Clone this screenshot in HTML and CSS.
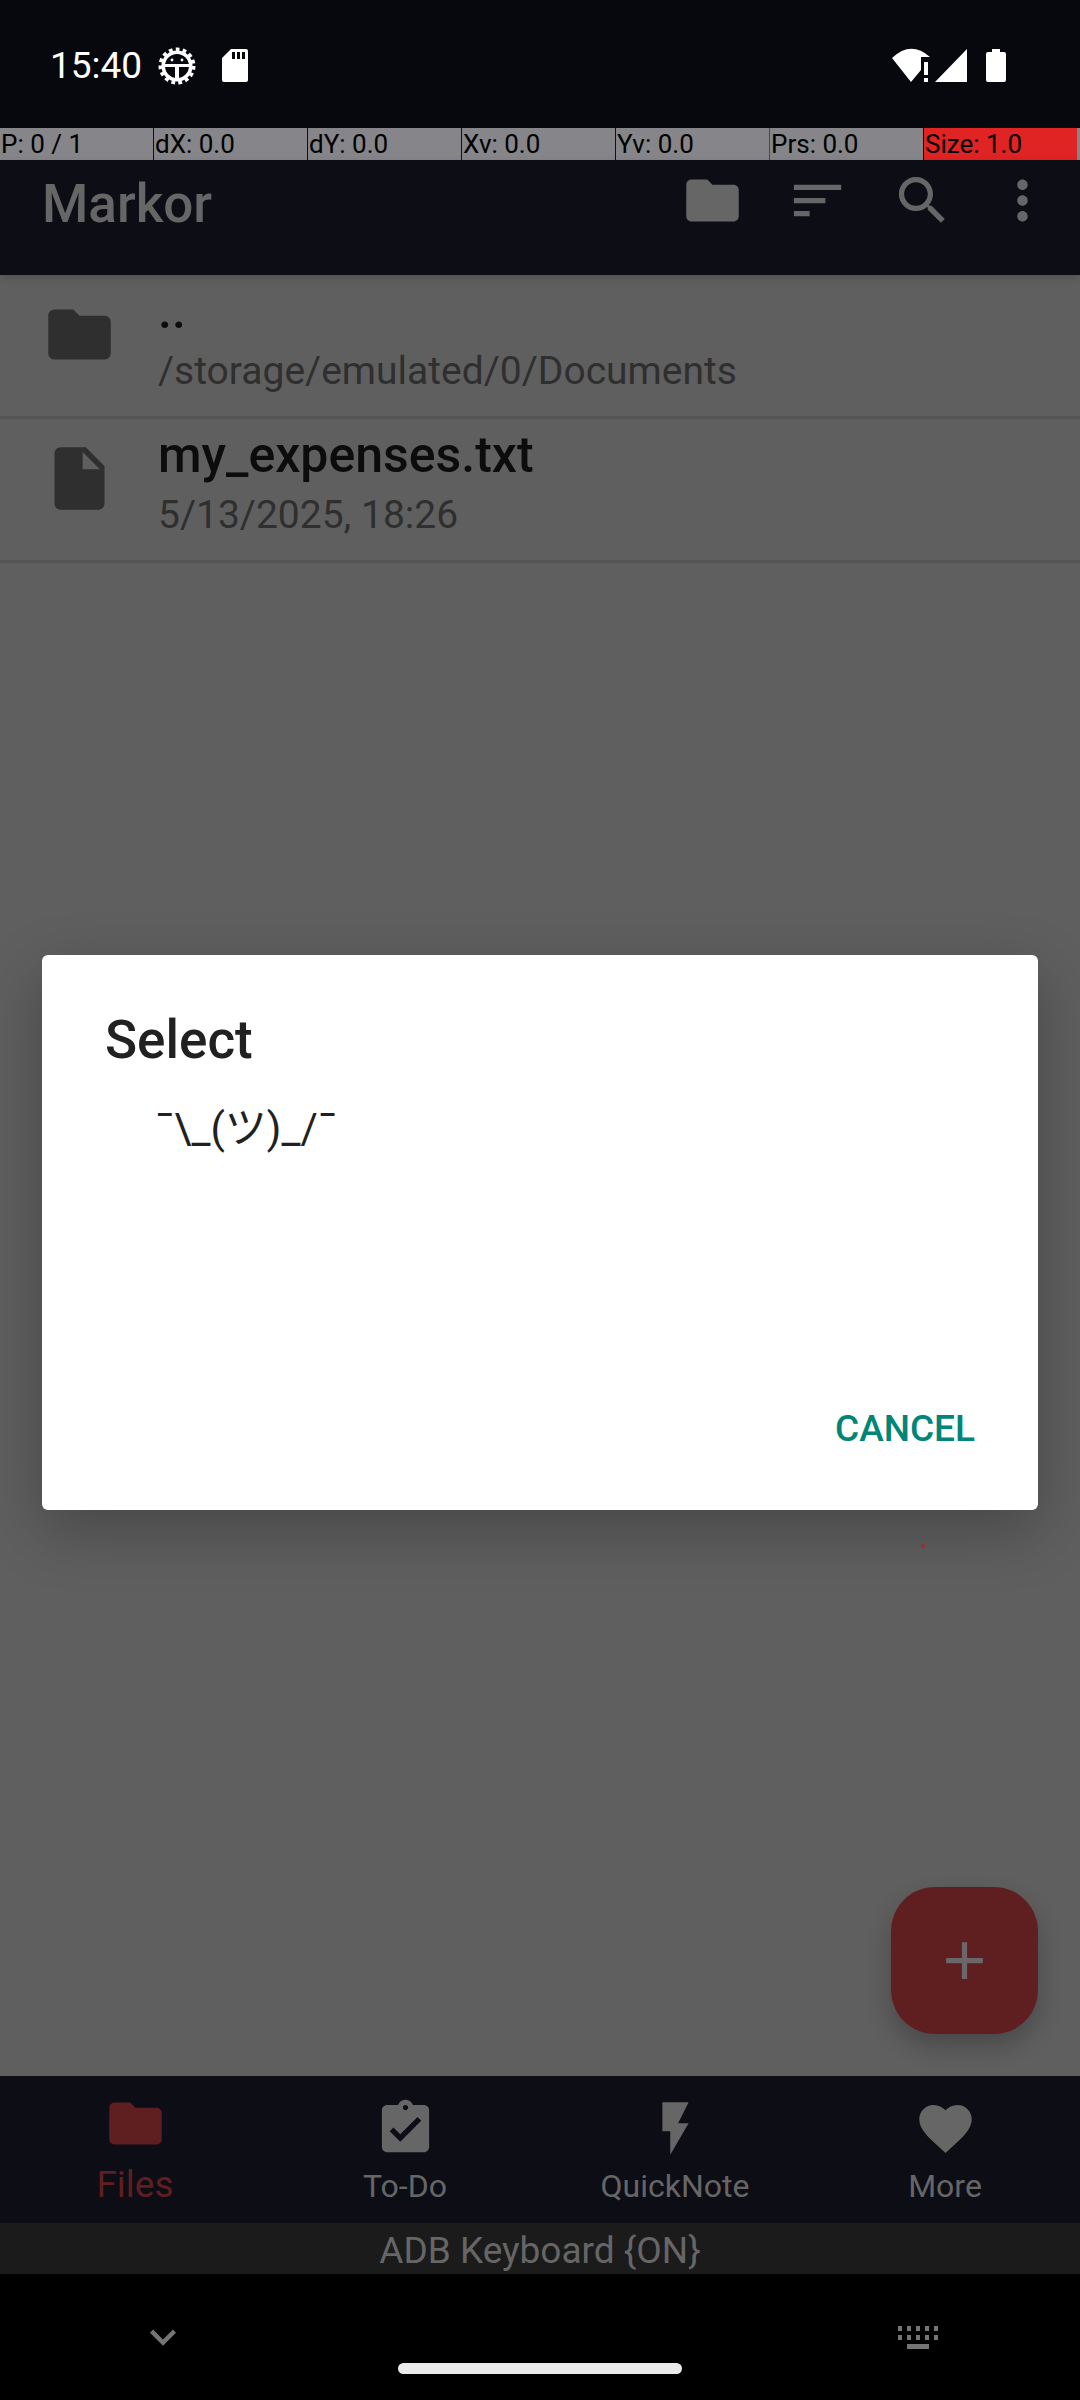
FILE: index.html
```html
<!DOCTYPE html>
<html lang="en">
<head>
<meta charset="utf-8">
<meta name="viewport" content="width=device-width, initial-scale=1">
<title>Markor</title>
<link rel="stylesheet" href="styles.css">
</head>
<body>
<svg class="defs" width="0" height="0" aria-hidden="true">
  <symbol id="folder" viewBox="0 0 24 24"><path d="M10 4H4c-1.100 0-1.990.9-1.990 2L2 18c0 1.100.9 2 2 2h16c1.100 0 2-.9 2-2V8c0-1.100-.9-2-2-2h-8l-2-2z"/></symbol>
</svg>
<div class="screen">
  <header class="status">
    <span class="clock">15:40</span>
    <svg class="gear" viewBox="0 0 38 38" aria-hidden="true">
      <circle cx="19" cy="19" r="13.800" fill="none" stroke="currentColor" stroke-width="3.600"/>
      <circle cx="19" cy="19" r="16.500" fill="none" stroke="currentColor" stroke-width="4" stroke-dasharray="3.700 3.212"/>
      <path d="M5 17h28v3H21v14h-4V20H5z"/>
      <circle cx="14" cy="13" r="1.400"/><circle cx="24" cy="13" r="1.400"/>
    </svg>
    <svg class="sd" viewBox="0 0 26 34" aria-hidden="true"><path fill-rule="evenodd" d="M9 0h15a2 2 0 0 1 2 2v29a2 2 0 0 1-2 2H2a2 2 0 0 1-2-2V9zM10 3v7h3V3zM15 3v7h3V3zM20 3v7h3V3z"/></svg>
    <span class="spacer"></span>
    <svg class="signals" viewBox="0 0 116 36" aria-hidden="true">
      <path d="M0 10Q19-8 38 9H29V22L19 34z"/><path d="M32 14h4v13h-4zM32 30h4v4h-4z"/>
      <path d="M43 34L75 1V34z"/>
      <path d="M100 1h8v3h4a2 2 0 0 1 2 2v26a2 2 0 0 1-2 2H96a2 2 0 0 1-2-2V6a2 2 0 0 1 2-2h4z"/>
    </svg>
  </header>
  <div class="pointer-bar">
    <span>P: 0 / 1</span><span>dX: 0.0</span><span>dY: 0.0</span><span>Xv: 0.0</span><span class="before-red">Yv: 0.0</span><span>Prs: 0.0</span><span class="hot">Size: 1.0</span>
  </div>
  <div class="toolbar">
    <h1>Markor</h1>
    <div class="tools">
      <button aria-label="Folder"><svg class="icon" viewBox="0 0 24 24"><use href="#folder"/></svg></button>
      <button aria-label="Sort"><svg class="icon" viewBox="0 0 24 24"><path d="M3 18h6v-2H3v2zM3 6v2h18V6H3zm0 7h12v-2H3v2z"/></svg></button>
      <button aria-label="Search"><svg class="icon" viewBox="0 0 24 24"><path d="M15.500 14h-.79l-.28-.27C15.410 12.590 16 11.110 16 9.500 16 5.910 13.090 3 9.500 3S3 5.910 3 9.500 5.910 16 9.500 16c1.610 0 3.090-.59 4.230-1.570l.27.28v.79l5 4.990L20.490 19l-4.990-5zm-6 0C7.010 14 5 11.990 5 9.500S7.010 5 9.500 5 14 7.010 14 9.500 11.990 14 9.500 14z"/></svg></button>
    </div>
    <button aria-label="More options"><svg class="icon" viewBox="0 0 24 24"><path d="M12 8c1.100 0 2-.9 2-2s-.9-2-2-2-2 .9-2 2 .9 2 2 2zm0 2c-1.100 0-2 .9-2 2s.9 2 2 2 2-.9 2-2-.9-2-2-2zm0 6c-1.100 0-2 .9-2 2s.9 2 2 2 2-.9 2-2-.9-2-2-2z"/></svg></button>
  </div>
  <main class="content">
    <ul class="files">
      <li><svg class="file-icon" viewBox="0 0 24 24" aria-hidden="true"><use href="#folder"/></svg><div><div class="name">..</div><div class="detail">/storage/emulated/0/Documents</div></div></li>
      <li><svg class="file-icon" viewBox="0 0 24 24" aria-hidden="true"><path d="M6 2c-1.100 0-1.990.9-1.990 2L4 20c0 1.100.89 2 1.990 2H18c1.100 0 2-.9 2-2V8l-6-6H6zm7 7V3.500L18.500 9H13z"/></svg><div><div class="name">my_expenses.txt</div><div class="detail">5/13/2025, 18:26</div></div></li>
    </ul>
    <button class="fab" aria-label="Add"><svg class="icon" viewBox="0 0 24 24"><path d="M19 13h-6v6h-2v-6H5v-2h6V5h2v6h6v2z"/></svg></button>
  </main>
  <nav class="tabs">
    <a href="#files" class="active"><svg class="icon" viewBox="0 0 24 24"><use href="#folder"/></svg>Files</a>
    <a href="#todo"><svg class="icon" viewBox="0 0 24 24"><path d="M18 3h-3.180C14.400 1.840 13.300 1 12 1c-1.300 0-2.400.84-2.820 2H5c-1.100 0-2 .9-2 2v14c0 1.100.9 2 2 2h14c1.100 0 2-.9 2-2V5c0-1.100-.9-2-2-2zm-6 0c.55 0 1 .45 1 1s-.45 1-1 1-1-.45-1-1 .45-1 1-1zm-2 14l-4-4 1.410-1.410L10 14.170l6.590-6.590L18 9l-8 8z"/></svg>To-Do</a>
    <a href="#quicknote"><svg class="icon" viewBox="0 0 24 24"><path d="M7 2v11h3v9l7-12h-4l4-8z"/></svg>QuickNote</a>
    <a href="#more"><svg class="icon" viewBox="0 0 24 24"><path d="M12 21.350l-1.450-1.320C5.400 15.360 2 12.280 2 8.500 2 5.420 4.420 3 7.500 3c1.740 0 3.410.81 4.500 2.090C13.090 3.810 14.760 3 16.500 3 19.580 3 22 5.420 22 8.500c0 3.780-3.400 6.860-8.550 11.540L12 21.350z"/></svg>More</a>
  </nav>
  <div class="keyboard">ADB Keyboard {ON}</div>
  <footer class="system">
    <button aria-label="Hide keyboard"><svg class="sys-icon" viewBox="0 0 24 24"><path d="M7.410 8.590L12 13.170l4.590-4.580L18 10l-6 6-6-6z"/></svg></button>
    <span class="pill"></span>
    <button aria-label="Switch keyboard"><svg class="keys" viewBox="0 0 41 24"><path d="M0 0h4v5H0zM9 0h4v5H9zM18 0h4v5h-4zM27 0h4v5h-4zM36 0h4v5h-4zM0 9h4v5H0zM9 9h4v5H9zM18 9h4v5h-4zM27 9h4v5h-4zM36 9h4v5h-4zM9 18h22v5H9z"/></svg></button>
  </footer>
  <span class="touch"></span>
  <div class="overlay">
    <section class="dialog" role="dialog" aria-labelledby="dialog-title">
      <h2 id="dialog-title">Select</h2>
      <ul class="options"><li><button>¯\_(ツ)_/¯</button></li></ul>
      <div class="actions"><button>CANCEL</button></div>
    </section>
  </div>
</div>
</body>
</html>
```
FILE: styles.css
```css
* { box-sizing: border-box; }
body { margin: 0; background: #5f5f5f; font-family: Roboto, "Noto Sans CJK JP", sans-serif; }
h1, h2, ul { margin: 0; padding: 0; }
h1, h2 { font-size: 53px; font-weight: 500; line-height: 62px; }
ul { list-style: none; }
button { margin: 0; padding: 0; border: 0; background: none; color: inherit; font: inherit; display: block; }
svg { display: block; fill: currentColor; }
.defs { position: absolute; }
.icon { width: 63px; height: 63px; }

.screen { position: relative; display: flex; flex-direction: column; min-height: 100vh; color: #666; }

.status { display: flex; align-items: center; height: 128px; padding: 4px 72px 0 50px; background: #07080d; color: #fff; }
.clock { font-size: 37px; line-height: 44px; }
.gear { width: 38px; height: 38px; margin-left: 16px; }
.sd { width: 26px; height: 34px; margin-left: 26px; }
.spacer { flex: 1; }
.signals { width: 116px; height: 36px; }

.pointer-bar { display: flex; gap: 1px; height: 32px; padding-right: 3px; background: linear-gradient(to left, #868589 3px, #111 3px); color: #000; font-size: 26px; line-height: 32px; }
.pointer-bar span { flex: 1; padding-left: 1px; background: #868589; }
.pointer-bar .before-red { box-shadow: 1px 0 #a32025; }
.pointer-bar .hot { background: #e02323; }

.toolbar { position: relative; display: flex; align-items: flex-start; gap: 37px; height: 115px; padding: 9px 26px 0 42px; background: #0d0d16; box-shadow: 0 3px 8px rgba(0, 0, 0, .16); }
.toolbar h1 { flex: 1; padding-top: 4px; }
.tools { display: flex; gap: 42px; }

.content { flex: 1; display: flex; flex-direction: column; }
.files li { display: flex; height: 144px; padding: 6px 42px 0; gap: 41px; border-bottom: 3px solid #555; }
.file-icon { width: 75px; height: 75px; margin-top: 16px; color: #2f2f2f; }
.name { color: #0c0c0c; font-size: 50px; font-weight: 500; line-height: 60px; }
.detail { padding-top: 6px; color: #2f2f2f; font-size: 39px; line-height: 48px; }
.fab { display: grid; place-items: center; width: 147px; height: 147px; margin: auto 42px 42px auto; border-radius: 44px; background: #5f1e1f; color: #6b6768; box-shadow: 0 12px 24px rgba(0, 0, 0, .24); }

.tabs { display: grid; grid-template-columns: repeat(4, 1fr); height: 147px; background: #0d0d16; }
.tabs a { display: flex; flex-direction: column; align-items: center; gap: 6px; padding-top: 21px; color: #666; font-size: 32px; line-height: 40px; text-decoration: none; }
.tabs .active { gap: 8px; padding-top: 16px; color: #5f1e1f; font-size: 37px; line-height: 44px; }

.keyboard { height: 51px; background: #1b1b1b; font-size: 37px; line-height: 55px; text-align: center; }
.system { display: grid; grid-template-columns: 1fr 284px 1fr; align-items: start; height: 126px; background: #000; color: #757575; }
.sys-icon { width: 52px; height: 52px; margin: 37px 0 0 137px; }
.pill { align-self: end; height: 11px; margin-bottom: 26px; border-radius: 6px; background: #ebebeb; }
.keys { width: 41px; height: 24px; margin: 52px 0 0 216px; }

.touch { position: absolute; left: 921px; top: 1544px; width: 4px; height: 4px; border-radius: 2px; background: #a02c2c; z-index: 1; }
.overlay { position: absolute; inset: 65px 0 0; display: grid; place-items: center; padding: 0 42px; }
.dialog { display: flex; flex-direction: column; width: 100%; min-height: 555px; padding: 54px 63px; border-radius: 6px; background: #fff; color: #212121; box-shadow: 0 20px 60px rgba(0, 0, 0, .26); }
.options { padding: 26px 0 0 50px; font-size: 42px; line-height: 64px; }
.actions { display: flex; justify-content: flex-end; margin-top: auto; color: #008577; font-size: 37px; font-weight: 500; line-height: 55px; }
```
